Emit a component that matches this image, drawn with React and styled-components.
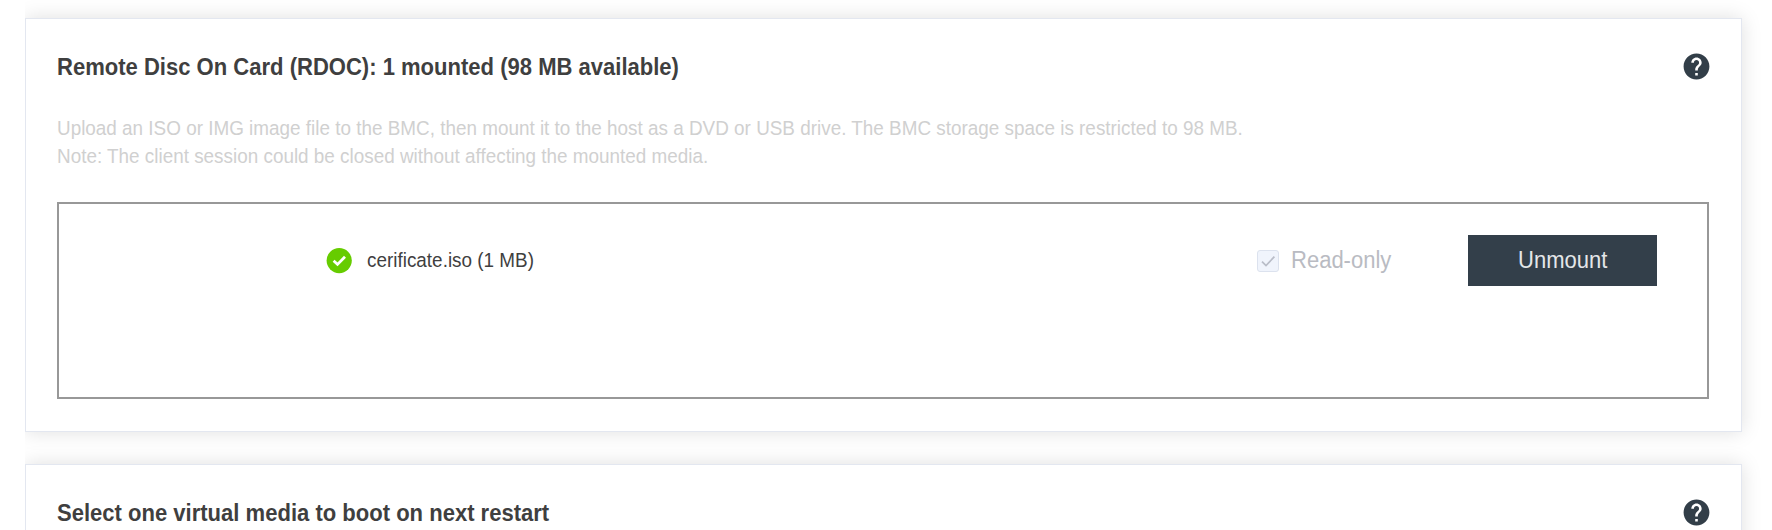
import React from "react";
import styled, { createGlobalStyle, css } from "styled-components";
import { MdHelp } from "react-icons/md";

const GlobalStyle = createGlobalStyle`
  * { box-sizing: border-box; }
  body {
    margin: 0;
    height: 530px;
    overflow: hidden;
    background: #fff;
    font-family: "Liberation Sans", Arial, sans-serif;
    color: #3f3f3f;
  }
`;

/* Slightly condensed lettering, narrowed towards its left edge. */
const condensed = (ratio) => css`
  transform: scaleX(${ratio});
  transform-origin: left center;
`;

const Page = styled.main`
  display: flex;
  flex-direction: column;
  gap: 32px;
  height: 530px;
  margin-left: 25px;
  padding: 18px 30px 0 0;
  overflow: hidden;
`;

const Card = styled.section`
  flex: none;
  height: ${(p) => p.$height}px;
  padding: 31px 32px 0 31px;
  border: 1px solid #e3e7f0;
  background: #fff;
  box-shadow: 0 0 19px rgba(0, 0, 0, 0.13);
`;

const CardHeader = styled.header`
  display: flex;
  align-items: center;
  justify-content: space-between;
  height: 34px;
`;

const Title = styled.h2`
  margin: 0;
  font-size: 23px;
  font-weight: 700;
  line-height: 34px;
  white-space: nowrap;
  ${condensed(0.958)}
`;

const HelpButton = styled.button`
  display: flex;
  margin: -1px -3px 1px 0;
  padding: 0;
  border: 0;
  background: none;
  color: #323e48;
`;

const Description = styled.p`
  margin: 30px 0 0;
  color: #d0d0d0;
  font-size: 20.5px;
  line-height: 28px;
  white-space: nowrap;
`;

const Line = styled.span`
  display: block;
  ${condensed(0.9213)}
`;

const MediaBox = styled.div`
  height: 197px;
  margin-top: 32px;
  padding: 31px 50px 0 267px;
  border: 2px solid #989898;
`;

const MediaRow = styled.div`
  display: flex;
  align-items: center;
  height: 51px;
`;

const FileName = styled.span`
  margin: -2px 0 0 15px;
  font-size: 20.5px;
  ${condensed(0.922)}
`;

const ReadOnly = styled.label`
  display: flex;
  align-items: center;
  gap: 12px;
  margin-left: auto;
  color: #b9bbc2;
  font-size: 23px;
`;

const ReadOnlyText = styled.span`
  margin-right: -3.5px;
  ${condensed(0.957)}
`;

const CheckBox = styled.span`
  display: flex;
  width: 22px;
  height: 22px;
  border: 1.5px solid #dce2ee;
  border-radius: 3px;
  background: #f0f4fc;
`;

const UnmountButton = styled.button`
  width: 189px;
  height: 51px;
  margin-left: 76px;
  padding: 0;
  border: 0;
  background: #333f4a;
  color: #e4e6e8;
  font: 23px "Liberation Sans", Arial, sans-serif;
`;

const ButtonText = styled.span`
  display: inline-block;
  transform: scaleX(0.957);
`;

const SuccessIcon = () => (
  <svg width="26" height="26" viewBox="0 0 26 26">
    <circle cx="13.2" cy="12.6" r="12.6" fill="#6c0" />
    <path d="M7.6 12.8 11.5 16.4 19 8.8" fill="none" stroke="#fff" strokeWidth="2.8" />
  </svg>
);

const Tick = () => (
  <svg width="20" height="20" viewBox="0 0 20 20">
    <path d="M4 10.6 8 14.6 16.4 5.6" fill="none" stroke="#b9bdc8" strokeWidth="1.7" />
  </svg>
);

const Help = () => (
  <HelpButton aria-label="Help">
    <MdHelp size={31} />
  </HelpButton>
);

export default function App() {
  return (
    <>
      <GlobalStyle />
      <Page>
        <Card $height={414}>
          <CardHeader>
            <Title>Remote Disc On Card (RDOC): 1 mounted (98 MB available)</Title>
            <Help />
          </CardHeader>
          <Description>
            <Line>
              Upload an ISO or IMG image file to the BMC, then mount it to the host as a DVD or USB drive. The BMC
              storage space is restricted to 98 MB.
            </Line>
            <Line>Note: The client session could be closed without affecting the mounted media.</Line>
          </Description>
          <MediaBox>
            <MediaRow>
              <SuccessIcon />
              <FileName>cerificate.iso (1 MB)</FileName>
              <ReadOnly>
                <CheckBox>
                  <Tick />
                </CheckBox>
                <ReadOnlyText>Read-only</ReadOnlyText>
              </ReadOnly>
              <UnmountButton>
                <ButtonText>Unmount</ButtonText>
              </UnmountButton>
            </MediaRow>
          </MediaBox>
        </Card>
        <Card $height={200}>
          <CardHeader>
            <Title>Select one virtual media to boot on next restart</Title>
            <Help />
          </CardHeader>
        </Card>
      </Page>
    </>
  );
}
